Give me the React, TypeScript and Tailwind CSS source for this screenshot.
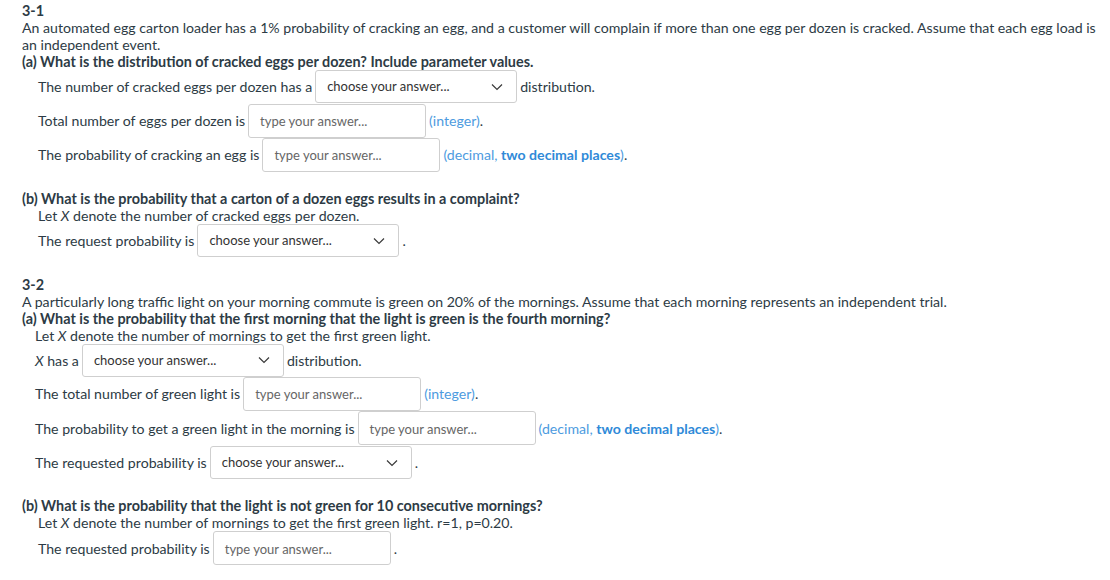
import React from "react";

const Chevron = () => (
  <svg width="12" height="8" viewBox="0 0 12 8" className="shrink-0">
    <polyline points="1,1.5 6,6.5 11,1.5" fill="none" stroke="#3a3a3a" strokeWidth="1.2" />
  </svg>
);

const Select = () => (
  <div className="ml-[3px] mr-[3px] flex h-[33px] w-[202px] items-center justify-between rounded-[3px] border border-[#cfcfcf] bg-white pl-[11px] pr-[13px] text-[13px] text-[#333]">
    <span>choose your answer...</span>
    <Chevron />
  </div>
);

const Input = () => (
  <div className="ml-[3px] mr-[3px] flex h-[34px] w-[178px] items-center rounded-[3px] border border-[#cfcfcf] bg-white pl-[11px] pt-[2px] text-[13px] text-[#666]">
    <span>type your answer...</span>
  </div>
);

const Integer = () => <span className="text-[#4d9be0]">(integer)</span>;

const Decimal = () => (
  <span>
    <span className="text-[#4d9be0]">(decimal, </span>
    <span className="font-bold text-[#2f8ad8]">two decimal places</span>
    <span className="text-[#4d9be0]">)</span>
  </span>
);

const Row = ({ children, h = "h-[34px]" }: { children: React.ReactNode; h?: string }) => (
  <div className={`flex ${h} items-center whitespace-nowrap`}>{children}</div>
);

export default function App() {
  return (
    <div
      className="bg-white pl-[22px] pr-[10px] pt-[1.5px] text-[14.13px] leading-[17px] text-[#2d3b45]"
      style={{ fontFamily: "Lato, 'Noto Sans', sans-serif" }}
    >
      <div className="text-[14.4px] font-bold">3-1</div>
      <p>
        An automated egg carton loader has a 1% probability of cracking an egg, and a customer will complain if more than one egg per dozen is cracked. Assume that each egg load is an independent event.
      </p>
      <div className="text-[14.4px] font-bold">(a) What is the distribution of cracked eggs per dozen? Include parameter values.</div>
      <div className="pl-[16px]">
        <Row>
          The number of cracked eggs per dozen has a <Select /> distribution.
        </Row>
        <Row>
          Total number of eggs per dozen is <Input /> <Integer />.
        </Row>
        <Row>
          The probability of cracking an egg is <Input /> <Decimal />.
        </Row>
      </div>

      <div className="mt-[18px] text-[14.4px] font-bold">(b) What is the probability that a carton of a dozen eggs results in a complaint?</div>
      <div className="pl-[16px]">
        <div>
          Let <i>X</i> denote the number of cracked eggs per dozen.
        </div>
        <Row>
          The request probability is <Select />.
        </Row>
      </div>

      <div className="mt-[18px] text-[14.4px] font-bold">3-2</div>
      <p>
        A particularly long traffic light on your morning commute is green on 20% of the mornings. Assume that each morning represents an independent trial.
      </p>
      <div className="text-[14.4px] font-bold">(a) What is the probability that the first morning that the light is green is the fourth morning?</div>
      <div className="pl-[13px]">
        <div>
          Let <i>X</i> denote the number of mornings to get the first green light.
        </div>
        <Row h="h-[33px]">
          <i>X</i>&nbsp;has a <Select /> distribution.
        </Row>
        <Row>
          The total number of green light is <Input /> <Integer />.
        </Row>
        <Row h="h-[35px]">
          The probability to get a green light in the morning is <Input /> <Decimal />.
        </Row>
        <Row>
          The requested probability is <Select />.
        </Row>
      </div>

      <div className="mt-[17.5px] text-[14.4px] font-bold">(b) What is the probability that the light is not green for 10 consecutive mornings?</div>
      <div className="pl-[16px]">
        <div>
          Let <i>X</i> denote the number of mornings to get the first green light. r=1, p=0.20.
        </div>
        <Row>
          The requested probability is <Input />.
        </Row>
      </div>
    </div>
  );
}
